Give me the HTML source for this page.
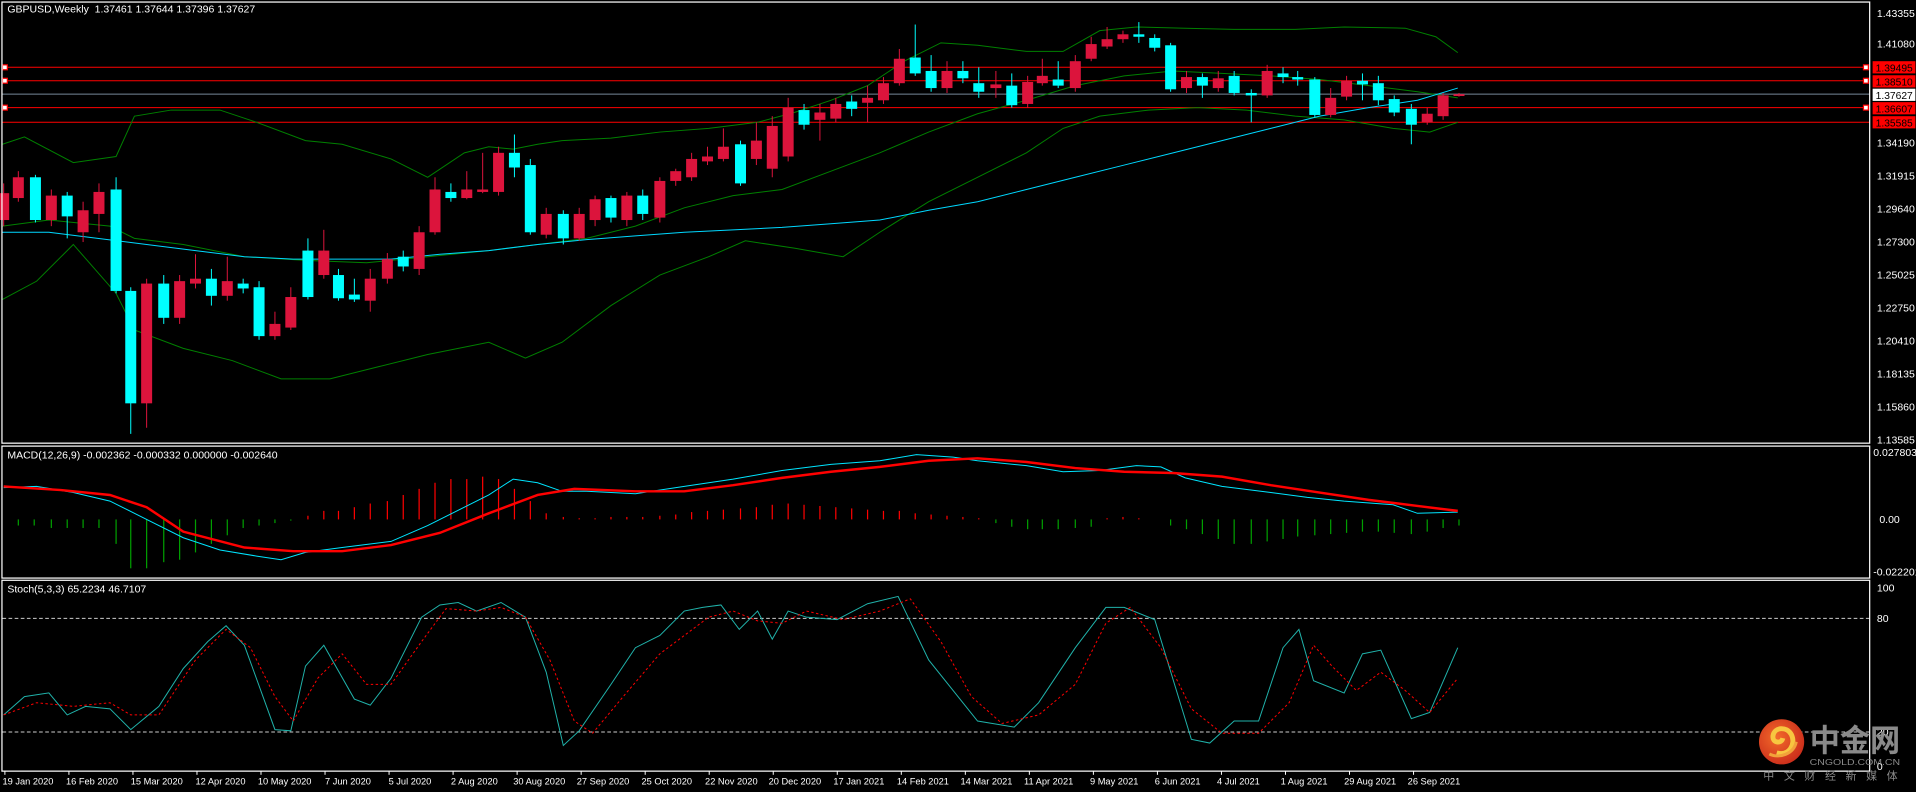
<!DOCTYPE html>
<html><head><meta charset="utf-8"><style>
html,body{margin:0;padding:0;background:#000;width:1916px;height:792px;overflow:hidden}
svg{display:block}
text{font-family:"Liberation Sans","Noto Sans CJK SC",sans-serif}
</style></head><body>
<svg id="s" width="1916" height="792" viewBox="0 0 1568 648" xmlns="http://www.w3.org/2000/svg">
<rect width="1568" height="648" fill="#000"/>
<g id="g"></g>
<g fill="none" stroke="#fff" stroke-width="1">
<rect x="1.6" y="1.6" width="1528.5" height="361"/>
<rect x="1.6" y="365" width="1528.5" height="108"/>
<rect x="1.6" y="474.8" width="1528.5" height="156.2"/>
</g>
<g font-size="8.6" fill="#fff">
<text x="6" y="10">GBPUSD,Weekly&#160; 1.37461 1.37644 1.37396 1.37627</text>
<text x="6" y="375">MACD(12,26,9) -0.002362 -0.000332 0.000000 -0.002640</text>
<text x="6" y="485">Stoch(5,3,3) 65.2234 46.7107</text>
</g>
<g font-size="8.6" fill="#fff">
<text x="1536" y="14">1.43355</text>
<text x="1536" y="39">1.41080</text>
<text x="1536" y="120">1.34190</text>
<text x="1536" y="147">1.31915</text>
<text x="1536" y="174">1.29640</text>
<text x="1536" y="201">1.27300</text>
<text x="1536" y="228">1.25025</text>
<text x="1536" y="255">1.22750</text>
<text x="1536" y="282">1.20410</text>
<text x="1536" y="309">1.18135</text>
<text x="1536" y="336">1.15860</text>
<text x="1536" y="363">1.13585</text>
<text x="1533" y="373">0.027803</text>
<text x="1538" y="428">0.00</text>
<text x="1533" y="471">-0.022201</text>
<text x="1536" y="484">100</text>
<text x="1536" y="509">80</text>
<text x="1536" y="602">20</text>
<text x="1536" y="630">0</text>
</g>
<g font-size="8.4">
<rect x="1532.5" y="50" width="35" height="10" fill="#f00"/><text x="1535" y="58.5" fill="#000">1.39495</text>
<rect x="1532.5" y="61.5" width="35" height="10" fill="#f00"/><text x="1535" y="70" fill="#000">1.38510</text>
<rect x="1532.5" y="72.5" width="35" height="10" fill="#fff"/><text x="1535" y="81" fill="#000">1.37627</text>
<rect x="1532.5" y="83.5" width="35" height="10" fill="#f00"/><text x="1535" y="92" fill="#000">1.36607</text>
<rect x="1532.5" y="95" width="35" height="10" fill="#f00"/><text x="1535" y="103.5" fill="#000">1.35585</text>
</g>
<defs><radialGradient id="lg" cx="0.4" cy="0.4" r="0.7"><stop offset="0" stop-color="#f26a2a"/><stop offset="1" stop-color="#c8281a"/></radialGradient></defs>
<circle cx="1458" cy="607" r="18.5" fill="url(#lg)"/>
<path d="M1454 616 C1464 619 1470 609 1466 601 C1462 594 1452 595 1451 602 C1450 608 1458 609 1459 604" fill="none" stroke="#f7c640" stroke-width="4"/>
<path d="M1448 617 C1456 621 1468 617 1470 607" fill="none" stroke="#f2a23a" stroke-width="2.5"/>
<text x="1481" y="615" font-size="25.5" font-weight="bold" fill="#8a8a8a" textLength="74" lengthAdjust="spacingAndGlyphs">中金网</text>
<text x="1481" y="626" font-size="7" fill="#8a8a8a" textLength="74" lengthAdjust="spacingAndGlyphs">CNGOLD.COM.CN</text>
<text x="1443" y="638" font-size="9" fill="#8a8a8a" textLength="110">中文财经新媒体</text>
<g font-size="7.6" fill="#fff">
<text x="2" y="642">19 Jan 2020</text><text x="54" y="642">16 Feb 2020</text><text x="107" y="642">15 Mar 2020</text><text x="160" y="642">12 Apr 2020</text><text x="211" y="642">10 May 2020</text><text x="266" y="642">7 Jun 2020</text><text x="318" y="642">5 Jul 2020</text><text x="369" y="642">2 Aug 2020</text><text x="420" y="642">30 Aug 2020</text><text x="472" y="642">27 Sep 2020</text><text x="525" y="642">25 Oct 2020</text><text x="577" y="642">22 Nov 2020</text><text x="629" y="642">20 Dec 2020</text><text x="682" y="642">17 Jan 2021</text><text x="734" y="642">14 Feb 2021</text><text x="786" y="642">14 Mar 2021</text><text x="838" y="642">11 Apr 2021</text><text x="892" y="642">9 May 2021</text><text x="945" y="642">6 Jun 2021</text><text x="996" y="642">4 Jul 2021</text><text x="1048" y="642">1 Aug 2021</text><text x="1100" y="642">29 Aug 2021</text><text x="1152" y="642">26 Sep 2021</text>
</g>
</svg>
<script>
var NS="http://www.w3.org/2000/svg",g=document.getElementById("g");
function el(t,a){var e=document.createElementNS(NS,t);for(var k in a)e.setAttribute(k,a[k]);g.appendChild(e);return e;}
function pl(p,c,w,d){el("polyline",{points:p.map(function(q){return q.join(",")}).join(" "),fill:"none",stroke:c,"stroke-width":w,"stroke-dasharray":d||""});}
var W=0.82;
[55,66,88,100].forEach(function(y){el("line",{x1:1.6,x2:1530,y1:y,y2:y,stroke:"#f00","stroke-width":W});});
el("line",{x1:1.6,x2:1530,y1:77,y2:77,stroke:"#778899","stroke-width":W});
[55,66,88].forEach(function(y){el("rect",{x:2,y:y-2,width:4,height:4,fill:"#fff",stroke:"#f00","stroke-width":1});el("rect",{x:1525,y:y-2,width:4,height:4,fill:"#fff",stroke:"#f00","stroke-width":1});});
for(var k=0;k<23;k++){var tx=4+k*52.4;el("line",{x1:tx,x2:tx,y1:631,y2:634,stroke:"#fff","stroke-width":W});}
pl([[2,118],[20,112],[60,133],[95,128],[110,95],[140,90],[180,90],[210,100],[250,115],[280,118],[320,130],[350,145],[380,125],[400,120],[420,122],[440,118],[460,115],[500,113],[540,108],[580,105],[620,100],[650,92],[680,82],[710,70],[740,50],[770,35],[800,37],[840,42],[870,42],[900,25],[930,22],[970,23],[1010,24],[1060,24],[1100,22],[1150,23],[1175,30],[1193,43]],"#008000",W);
pl([[2,185],[40,180],[90,185],[110,195],[150,200],[200,210],[250,213],[300,215],[350,210],[400,205],[440,200],[480,195],[520,185],[560,170],[600,160],[640,155],[680,140],[720,125],[760,108],[800,93],[840,82],[880,70],[920,62],[960,58],[1000,60],[1040,62],[1080,65],[1120,70],[1160,75],[1193,80]],"#008000",W);
pl([[2,245],[30,230],[60,200],[95,240],[110,270],[150,285],[190,295],[230,310],[270,310],[310,300],[350,290],[400,280],[430,293],[460,280],[500,250],[540,225],[580,210],[610,197],[650,203],[690,210],[720,190],[760,165],[800,145],[840,125],[870,105],[900,95],[940,90],[980,88],[1020,90],[1060,95],[1100,98],[1140,105],[1170,108],[1193,100]],"#008000",W);
pl([[2,190],[40,190],[80,195],[120,200],[160,205],[200,210],[240,212],[280,212],[320,212],[360,208],[400,205],[440,200],[480,196],[520,193],[560,190],[600,188],[640,186],[680,183],[720,180],[760,172],[800,165],[840,155],[880,145],[920,135],[960,125],[1000,115],[1040,105],[1080,95],[1120,88],[1160,82],[1193,72]],"#00d8ff",W);
var C=[[3,0,158,180,150,185],[15,0,145,162,140,165],[29,1,145,180,143,182],[42,0,160,180,155,185],[55,1,160,177,157,195],[68,0,172,190,165,198],[81,0,157,175,150,190],[95,1,155,238,145,240],[107,1,238,330,235,355],[120,0,232,330,228,350],[134,1,232,260,225,265],[147,0,230,260,225,265],[160,0,228,232,208,236],[173,1,228,242,220,250],[186,0,230,242,210,246],[199,1,232,236,228,240],[212,1,235,275,230,278],[225,0,265,275,255,278],[238,0,243,268,235,270],[252,1,205,243,195,245],[265,0,205,225,188,228],[277,1,225,244,220,246],[290,1,241,245,228,247],[303,0,228,246,220,255],[317,0,212,228,207,232],[330,1,210,218,205,222],[343,0,190,220,185,225],[356,0,155,190,145,192],[369,1,157,162,150,165],[382,0,155,162,140,163],[395,0,155,157,125,158],[408,0,125,157,120,160],[421,1,125,137,110,145],[434,1,135,190,130,192],[447,0,175,192,170,195],[461,1,175,195,172,200],[474,0,175,195,170,197],[487,0,163,180,160,185],[500,1,162,178,160,182],[513,0,160,180,157,185],[526,1,160,175,155,180],[540,0,148,178,145,182],[553,0,140,148,138,152],[566,0,130,145,125,148],[579,0,128,132,120,135],[592,0,120,130,105,132],[606,1,118,150,115,152],[619,0,115,130,100,135],[632,0,103,138,95,145],[645,0,88,128,80,132],[658,1,90,102,85,106],[671,0,92,98,85,115],[684,0,85,97,80,100],[697,1,83,89,78,95],[710,0,80,84,70,100],[723,0,68,82,63,85],[736,0,48,68,40,70],[749,1,47,60,20,62],[762,1,58,72,45,75],[775,0,58,72,50,76],[788,1,58,64,50,68],[801,1,68,75,55,80],[815,0,69,72,58,80],[828,1,70,86,60,88],[841,0,67,85,62,88],[853,0,62,68,48,70],[866,1,65,70,50,72],[880,0,50,72,45,75],[893,0,36,48,30,50],[906,0,32,38,22,40],[919,0,28,32,25,35],[932,1,28,30,18,35],[945,1,31,39,28,42],[958,1,37,73,35,75],[971,0,63,72,58,76],[984,1,63,70,60,80],[997,0,64,72,58,75],[1010,1,62,76,58,78],[1024,1,76,78,73,100],[1037,0,58,78,53,80],[1050,1,60,63,55,68],[1062,1,63,65,58,70],[1076,1,65,94,63,96],[1089,0,80,94,72,96],[1102,0,66,79,62,82],[1115,1,66,69,60,82],[1128,1,68,82,62,86],[1141,1,81,92,78,95],[1155,1,89,102,85,118],[1168,0,93,100,88,102],[1181,0,78,95,76,98],[1194,0,77,78.5,76,79]];
C.forEach(function(c){var col=c[1]?"#00ffff":"#dc143c";el("line",{x1:c[0],x2:c[0],y1:c[4],y2:c[5],stroke:col,"stroke-width":W});el("rect",{x:c[0]-4.5,y:c[2],width:9,height:Math.max(1,c[3]-c[2]),fill:col});});
var H=[[15,430],[28,430],[42,432],[55,432],[68,432],[81,432],[95,445],[107,465],[120,465],[134,460],[147,458],[160,452],[173,445],[186,438],[199,432],[212,430],[225,428],[238,426],[252,422],[265,418],[277,418],[290,415],[303,412],[317,410],[330,405],[343,400],[356,395],[369,392],[382,392],[395,390],[408,392],[421,400],[434,410],[447,420],[461,423],[474,424],[487,424],[500,423],[513,423],[526,423],[540,422],[553,421],[566,419],[579,418],[592,417],[606,416],[619,415],[632,413],[645,412],[658,413],[671,414],[684,415],[697,416],[710,417],[723,418],[736,418],[749,420],[762,421],[775,422],[788,423],[801,424],[815,428],[828,431],[841,433],[853,433],[866,433],[880,432],[893,431],[906,424],[919,423],[932,424],[945,425],[958,430],[971,433],[984,437],[997,441],[1010,445],[1024,445],[1037,443],[1050,441],[1062,439],[1076,438],[1089,437],[1102,436],[1115,435],[1128,435],[1141,436],[1155,437],[1168,435],[1181,432],[1194,430]];
H.forEach(function(h){el("line",{x1:h[0],x2:h[0],y1:425,y2:h[1],stroke:h[1]<425?"#ff0000":"#00a000","stroke-width":1});});
pl([[3,399],[30,398],[60,403],[90,410],[120,425],[150,440],[180,450],[210,455],[230,458],[250,452],[280,448],[320,443],[350,430],[380,415],[400,405],[420,392],[440,395],[460,402],[480,402],[520,404],[560,398],[600,392],[640,385],[680,380],[720,377],[750,372],[780,374],[800,377],[840,381],[870,386],[900,385],[930,381],[950,382],[970,391],[1000,398],[1040,403],[1070,407],[1100,410],[1140,413],[1160,420],[1193,419]],"#00e5ff",W);
pl([[3,398],[50,401],[90,405],[120,415],[150,435],[200,448],[240,451],[280,451],[320,446],[360,436],[400,420],[440,405],[470,400],[520,402],[560,402],[600,397],[640,391],[680,386],[720,382],[760,377],[800,375],[840,378],[880,383],[920,386],[960,387],[1000,390],[1040,397],[1080,403],[1120,409],[1160,414],[1193,418]],"#ff0000",2);
[506,599].forEach(function(y){el("line",{x1:2,x2:1530,y1:y,y2:y,stroke:"#ccc","stroke-width":W,"stroke-dasharray":"3,2"});});
pl([[3,585],[20,570],[40,567],[55,585],[70,578],[90,580],[107,597],[130,578],[150,547],[170,525],[185,512],[200,528],[225,597],[238,598],[250,545],[265,528],[290,572],[303,577],[320,555],[345,505],[360,495],[375,493],[390,500],[410,493],[430,505],[447,550],[461,610],[474,598],[500,560],[520,530],[540,520],[560,500],[575,497],[590,495],[605,515],[620,500],[632,523],[645,500],[660,505],[685,507],[710,494],[735,488],[760,540],[800,590],[830,595],[850,575],[880,530],[905,497],[920,497],[945,507],[975,605],[990,608],[1010,590],[1030,590],[1050,530],[1063,515],[1075,557],[1100,567],[1115,535],[1130,532],[1155,588],[1170,583],[1193,530]],"#20b2aa",W);
pl([[3,585],[30,575],[60,578],[90,575],[107,585],[130,585],[160,540],[185,515],[205,530],[225,570],[240,590],[260,555],[280,535],[300,560],[320,560],[345,525],[365,498],[390,500],[410,497],[430,505],[450,540],[470,590],[485,600],[510,570],[540,535],[560,520],[580,505],[600,500],[620,508],[640,510],[660,500],[690,507],[720,500],[745,490],[770,525],[795,570],[820,592],[850,585],[880,560],[905,510],[925,497],[950,530],[975,580],[1000,600],[1030,600],[1055,575],[1075,528],[1090,545],[1110,565],[1130,550],[1150,565],[1170,583],[1193,555]],"#ff0000",W,"2,2");
</script>
</body></html>
